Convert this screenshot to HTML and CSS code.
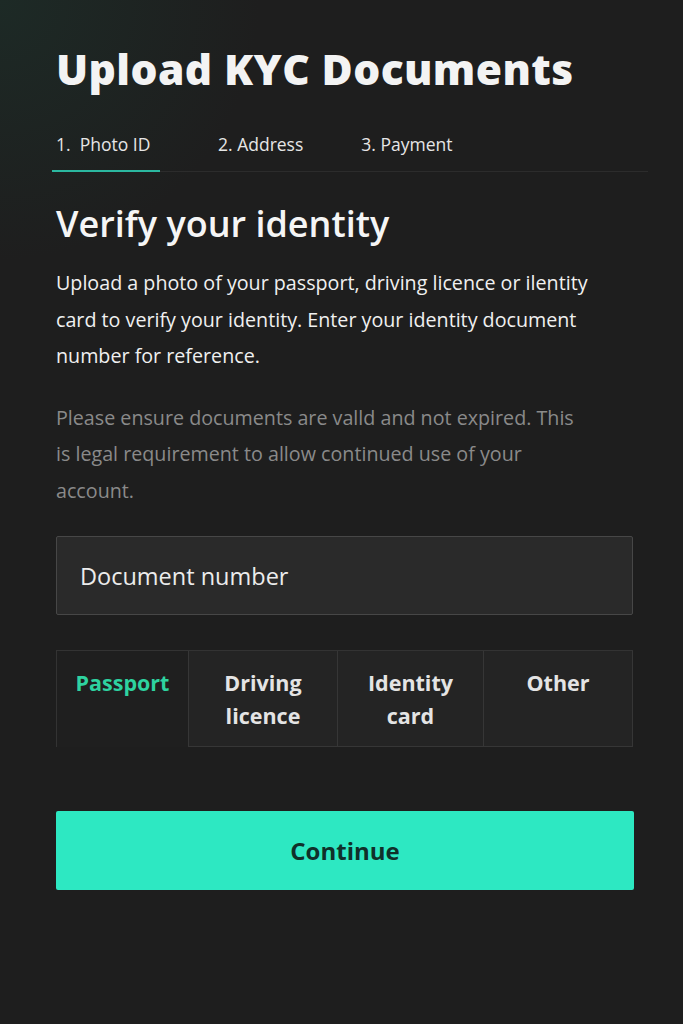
FILE: index.html
```html
<!DOCTYPE html>
<html lang="en">
<head>
  <meta charset="UTF-8">
  <meta name="viewport" content="width=device-width, initial-scale=1">
  <title>Upload KYC Documents</title>
  <link rel="stylesheet" href="styles.css">
</head>
<body>
  <div class="page">
    <h1>Upload KYC Documents</h1>

    <nav class="steps">
      <span class="step active">1.&nbsp; Photo ID</span>
      <span class="step">2. Address</span>
      <span class="step">3. Payment</span>
    </nav>

    <h2>Verify your identity</h2>
    <p class="lead">Upload a photo of your passport, driving licence or ilentity card to verify your identity. Enter your identity document number for reference.</p>
    <p class="note">Please ensure documents are valld and not expired. This is legal requirement to allow continued use of your account.</p>

    <input class="doc-number" type="text" placeholder="Document number">

    <div class="doc-types">
      <button class="doc-type active">Passport</button>
      <button class="doc-type">Driving<br>licence</button>
      <button class="doc-type">Identity<br>card</button>
      <button class="doc-type">Other</button>
    </div>

    <button class="continue">Continue</button>
  </div>
</body>
</html>
```

FILE: styles.css
```css
body {
  margin: 0;
  min-height: 1024px;
  background: radial-gradient(circle at 0 0, #1d2a26 0, #1e1e1e 260px);
  background-color: #1e1e1e;
  color: #f2f2f2;
  font-family: "Open Sans", "Noto Sans", sans-serif;
}
.page {
  width: 577px;
  margin-left: 56px;
  padding-top: 40px;
}
h1 {
  margin: 0;
  font-size: 42.5px;
  font-weight: 800;
  letter-spacing: 0.4px;
  color: #f3f3f3;
}
.steps {
  display: flex;
  margin: 35px -15px 0 -4px;
  border-bottom: 1px solid #2c2c2c;
}
.step {
  padding: 0 4px 14px;
  margin-right: 50px;
  font-size: 17.5px;
  color: #e6e6e6;
}
.step.active {
  border-bottom: 2px solid #2bb8a0;
  margin-bottom: -1px;
  width: 100px;
  margin-right: 54px;
}
h2 {
  margin: 27px 0 0;
  font-size: 36px;
  font-weight: 600;
  color: #f5f5f5;
}
.lead {
  margin: 17px 0 0;
  max-width: 560px;
  font-size: 19.7px;
  line-height: 36.5px;
  color: #f0f0f0;
}
.note {
  margin: 25px 0 0;
  max-width: 522px;
  font-size: 19.7px;
  line-height: 36.5px;
  color: #8a8a8a;
}
.doc-number {
  display: block;
  box-sizing: border-box;
  width: 100%;
  height: 79px;
  margin-top: 27px;
  padding: 0 23px;
  background: #2a2a2a;
  border: 1.5px solid #474747;
  border-radius: 2px;
  font-family: inherit;
  font-size: 23.5px;
  color: #f0f0f0;
}
.doc-number::placeholder {
  color: #ececec;
}
.doc-types {
  display: grid;
  grid-template-columns: 133px 149px 146px 1fr;
  height: 96px;
  margin-top: 35px;
  border-top: 1px solid #333;
}
.doc-type {
  display: flex;
  justify-content: center;
  align-items: flex-start;
  padding: 15px 4px 0;
  background: #242424;
  border: 1px solid #363636;
  border-top: none;
  border-left: none;
  font-family: inherit;
  font-size: 21.5px;
  font-weight: 700;
  line-height: 33px;
  color: #e4e4e4;
  text-align: center;
}
.doc-type.active {
  background: #1f1f1f;
  border-bottom: none;
  border-left: 1px solid #333;
  color: #2ed3a0;
}
.continue {
  display: block;
  width: 578px;
  height: 79px;
  margin-top: 64px;
  background: #2de8c2;
  border: none;
  border-radius: 2px;
  font-family: inherit;
  font-size: 24px;
  font-weight: 700;
  color: #10302a;
}
```
